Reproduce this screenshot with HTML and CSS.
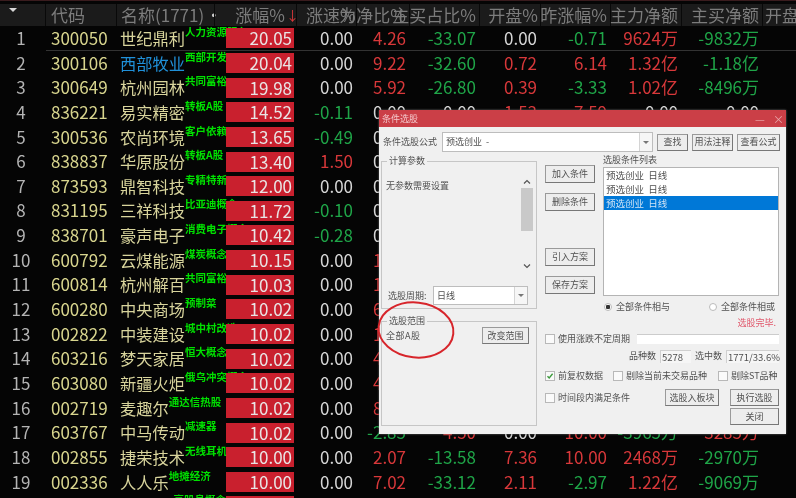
FILE: index.html
```html
<!DOCTYPE html>
<html lang="zh-CN">
<head>
    <meta charset="UTF-8">
    <title>条件选股</title>
    <link rel="stylesheet" href="styles.css">
</head>
<body>
<div class="page">
    <div class="head">
        <div class="hcell sort"><i class="sort-arrow"></i></div>
        <div class="hcell hleft">代码</div>
        <div class="hcell hname">名称(1771)<span class="hdot">·</span></div>
        <div class="hcell hrate">涨幅%<span class="down">↓</span></div>
        <div class="hcell hspeed">涨速%</div>
        <div class="hcell hnum">为净比%</div>
        <div class="hcell hnum">主买占比%</div>
        <div class="hcell hnum hopen">开盘%</div>
        <div class="hcell hnum">昨涨幅%</div>
        <div class="hcell hnum">主力净额</div>
        <div class="hcell hnum">主买净额</div>
        <div class="hcell hlast">开盘金额</div>
    </div>

    <div class="row first">
        <div class="no">1</div><div class="code">300050</div>
        <div class="name"><span>世纪鼎利</span><em>人力资源服务</em></div>
        <div class="rate"><b>20.05</b></div><div class="val">0.00</div><div class="val up">4.26</div><div class="val dn">-33.07</div><div class="val">0.00</div><div class="val dn">-0.71</div><div class="val up">9624万</div><div class="val dn">-9832万</div>
    </div>
    <div class="row">
        <div class="no">2</div><div class="code">300106</div>
        <div class="name"><span class="blue">西部牧业</span><em>西部开发</em></div>
        <div class="rate"><b>20.04</b></div><div class="val">0.00</div><div class="val up">9.22</div><div class="val dn">-32.60</div><div class="val up">0.72</div><div class="val up">6.14</div><div class="val up">1.32亿</div><div class="val dn">-1.18亿</div>
    </div>
    <div class="row">
        <div class="no">3</div><div class="code">300649</div>
        <div class="name"><span>杭州园林</span><em>共同富裕</em></div>
        <div class="rate"><b>19.98</b></div><div class="val">0.00</div><div class="val up">5.92</div><div class="val dn">-26.80</div><div class="val up">0.39</div><div class="val dn">-3.33</div><div class="val up">1.02亿</div><div class="val dn">-8496万</div>
    </div>
    <div class="row">
        <div class="no">4</div><div class="code">836221</div>
        <div class="name"><span>易实精密</span><em>转板A股</em></div>
        <div class="rate"><b>14.52</b></div><div class="val dn">-0.11</div><div class="val">0.00</div><div class="val">0.00</div><div class="val up">1.53</div><div class="val up">7.59</div><div class="val">0.00</div><div class="val">0.00</div>
    </div>
    <div class="row">
        <div class="no">5</div><div class="code">300536</div>
        <div class="name"><span>农尚环境</span><em>客户依赖</em></div>
        <div class="rate"><b>13.65</b></div><div class="val dn">-0.49</div><div class="val">0.00</div>
    </div>
    <div class="row">
        <div class="no">6</div><div class="code">838837</div>
        <div class="name"><span>华原股份</span><em>转板A股</em></div>
        <div class="rate"><b>13.40</b></div><div class="val up">1.50</div><div class="val">0.00</div>
    </div>
    <div class="row">
        <div class="no">7</div><div class="code">873593</div>
        <div class="name"><span>鼎智科技</span><em>专精特新</em></div>
        <div class="rate"><b>12.00</b></div><div class="val">0.00</div><div class="val">0.00</div>
    </div>
    <div class="row">
        <div class="no">8</div><div class="code">831195</div>
        <div class="name"><span>三祥科技</span><em>比亚迪概念</em></div>
        <div class="rate"><b>11.72</b></div><div class="val dn">-0.10</div><div class="val">0.00</div>
    </div>
    <div class="row">
        <div class="no">9</div><div class="code">838701</div>
        <div class="name"><span>豪声电子</span><em>消费电子概念</em></div>
        <div class="rate"><b>10.42</b></div><div class="val dn">-0.28</div><div class="val">0.00</div>
    </div>
    <div class="row">
        <div class="no">10</div><div class="code">600792</div>
        <div class="name"><span>云煤能源</span><em>煤炭概念</em></div>
        <div class="rate"><b>10.15</b></div><div class="val">0.00</div><div class="val up">1.15</div>
    </div>
    <div class="row">
        <div class="no">11</div><div class="code">600814</div>
        <div class="name"><span>杭州解百</span><em>共同富裕</em></div>
        <div class="rate"><b>10.03</b></div><div class="val">0.00</div><div class="val up">1.03</div>
    </div>
    <div class="row">
        <div class="no">12</div><div class="code">600280</div>
        <div class="name"><span>中央商场</span><em>预制菜</em></div>
        <div class="rate"><b>10.02</b></div><div class="val">0.00</div><div class="val up">6.02</div>
    </div>
    <div class="row">
        <div class="no">13</div><div class="code">002822</div>
        <div class="name"><span>中装建设</span><em>城中村改造</em></div>
        <div class="rate"><b>10.02</b></div><div class="val">0.00</div><div class="val up">1.02</div>
    </div>
    <div class="row">
        <div class="no">14</div><div class="code">603216</div>
        <div class="name"><span>梦天家居</span><em>恒大概念</em></div>
        <div class="rate"><b>10.02</b></div><div class="val">0.00</div><div class="val up">4.02</div>
    </div>
    <div class="row">
        <div class="no">15</div><div class="code">603080</div>
        <div class="name"><span>新疆火炬</span><em>俄乌冲突概念</em></div>
        <div class="rate"><b>10.02</b></div><div class="val">0.00</div><div class="val up">4.02</div>
    </div>
    <div class="row">
        <div class="no">16</div><div class="code">002719</div>
        <div class="name"><span>麦趣尔</span><em>通达信热股</em></div>
        <div class="rate"><b>10.02</b></div><div class="val">0.00</div><div class="val up">8.02</div>
    </div>
    <div class="row">
        <div class="no">17</div><div class="code">603767</div>
        <div class="name"><span>中马传动</span><em>减速器</em></div>
        <div class="rate"><b>10.02</b></div><div class="val">0.00</div><div class="val dn">-2.85</div><div class="val up">4.50</div><div class="val">0.00</div><div class="val up">10.00</div><div class="val dn">-3965万</div><div class="val up">3285万</div>
    </div>
    <div class="row">
        <div class="no">18</div><div class="code">002855</div>
        <div class="name"><span>捷荣技术</span><em>无线耳机</em></div>
        <div class="rate"><b>10.00</b></div><div class="val">0.00</div><div class="val up">2.07</div><div class="val dn">-13.58</div><div class="val up">7.36</div><div class="val up">10.00</div><div class="val up">2468万</div><div class="val dn">-2970万</div>
    </div>
    <div class="row">
        <div class="no">19</div><div class="code">002336</div>
        <div class="name"><span>人人乐</span><em>地摊经济</em></div>
        <div class="rate"><b>10.00</b></div><div class="val">0.00</div><div class="val up">7.02</div><div class="val dn">-33.12</div><div class="val up">2.11</div><div class="val dn">-2.97</div><div class="val up">1.22亿</div><div class="val dn">-9069万</div>
    </div>
    <div class="row">
        <div class="no"></div><div class="code"></div>
        <div class="name"><span class="blank"></span><em>高股息概念</em></div>
        <div class="rate"><b></b></div>
    </div>

    <!-- 条件选股 window -->
    <div class="dialog">
        <div class="dlg-title">
            <span>条件选股</span>
            <span class="win-btns"><i>—</i><i>×</i></span>
        </div>

        <div class="formula">
            <span class="formula-label">条件选股公式</span>
            <div class="combo combo-wide"><span>预选创业&nbsp;&nbsp;-</span><i class="caret"></i></div>
            <button class="btn btn-find">查找</button>
            <button class="btn btn-use">用法注释</button>
            <button class="btn btn-view">查看公式</button>
        </div>

        <div class="dlg-main">
            <div class="dlg-left">
                <fieldset class="group group-calc">
                    <legend>计算参数</legend>
                    <div class="calc-inner">
                        <div class="calc-text">无参数需要设置</div>
                        <div class="scrollbar">
                            <svg width="12" height="8" viewBox="0 0 12 8"><path d="M3 5.5 6 2.5 9 5.5" fill="none" stroke="#555" stroke-width="1.2"/></svg>
                            <div class="thumb"></div>
                            <svg class="scroll-down" width="12" height="8" viewBox="0 0 12 8"><path d="M3 2.5 6 5.5 9 2.5" fill="none" stroke="#555" stroke-width="1.2"/></svg>
                        </div>
                    </div>
                    <div class="period">
                        <span class="period-label">选股周期:</span>
                        <div class="combo combo-period"><span>日线</span><i class="caret"></i></div>
                    </div>
                </fieldset>
                <fieldset class="group group-range">
                    <legend>选股范围</legend>
                    <div class="range-row">
                        <span>全部A股</span>
                        <button class="btn btn-range">改变范围</button>
                    </div>
                </fieldset>
            </div>

            <div class="dlg-right">
                <div class="upper">
                    <div class="side-btns">
                        <button class="btn btn-side">加入条件</button>
                        <button class="btn btn-side">删除条件</button>
                        <button class="btn btn-side btn-gap">引入方案</button>
                        <button class="btn btn-side">保存方案</button>
                    </div>
                    <div class="list-col">
                        <div class="list-label">选股条件列表</div>
                        <div class="listbox">
                            <div class="item">预选创业&nbsp;&nbsp;日线</div>
                            <div class="item">预选创业&nbsp;&nbsp;日线</div>
                            <div class="item selected">预选创业&nbsp;&nbsp;日线</div>
                        </div>
                        <div class="radios">
                            <label class="radio-item"><i class="radio on"></i>全部条件相与</label>
                            <label class="radio-item"><i class="radio"></i>全部条件相或</label>
                        </div>
                        <div class="done">选股完毕.</div>
                    </div>
                </div>

                <div class="line line-period">
                    <i class="check"></i><span class="check-text">使用涨跌不定周期</span>
                    <div class="period-input"></div>
                </div>
                <div class="line line-count">
                    <span>品种数</span><span class="count-box count-a">5278</span>
                    <span>选中数</span><span class="count-box count-b">1771/33.6%</span>
                </div>
                <div class="line line-opts">
                    <i class="check"><svg width="8" height="8" viewBox="0 0 8 8"><path d="M1.5 4.2 3.2 6 6.6 1.8" fill="none" stroke="#3d9a3d" stroke-width="1.4"/></svg></i><span class="check-text opt-a">前复权数据</span>
                    <i class="check"></i><span class="check-text opt-b">剔除当前未交易品种</span>
                    <i class="check"></i><span class="check-text">剔除ST品种</span>
                </div>
                <div class="line line-run">
                    <i class="check"></i><span class="check-text run-text">时间段内满足条件</span>
                    <button class="btn btn-board">选股入板块</button>
                    <button class="btn btn-run">执行选股</button>
                </div>
                <div class="line line-close">
                    <button class="btn btn-run">关闭</button>
                </div>
            </div>
        </div>
    </div>

    <!-- hand-drawn ring over the window -->
    <svg class="ring" width="84" height="64" viewBox="0 0 84 64">
        <ellipse cx="42" cy="32" rx="37.5" ry="27.5" transform="rotate(6 42 32)" fill="none" stroke="#d7252b" stroke-width="2"/>
    </svg>
</div>
</body>
</html>
```

FILE: styles.css
```css
* {
    box-sizing: border-box;
}
html, body {
    margin: 0;
    height: 100%;
    background: #050505;
    overflow: hidden;
}
body {
    font-family: "Noto Sans CJK SC", "Liberation Sans", sans-serif;
}
.page {
    position: relative;
    width: 796px;
    height: 498px;
    overflow: hidden;
    border-top: 1px solid #3a1c1e;
    padding-top: 3px;
    filter: blur(0.35px);
}

/* table header */
.head {
    display: grid;
    grid-template-columns: 45px 71px 98px 82px 60px 53px 70px 61px 70px 71px 81px 34px;
    height: 22px;
    background: #1b1b1b;
    font-size: 17px;
    line-height: 22px;
    color: #7c7c7c;
    white-space: nowrap;
}
.hcell {
    border-left: 1px solid #090909;
    display: flex;
    justify-content: flex-end;
    padding-right: 3px;
}
.sort {
    border-left: 0;
    justify-content: flex-start;
    padding-left: 9px;
    align-items: center;
}
.sort-arrow {
    width: 0;
    height: 0;
    border-left: 4px solid transparent;
    border-right: 4px solid transparent;
    border-top: 4px solid #d8d8d8;
    margin-bottom: 10px;
}
.hleft {
    justify-content: flex-start;
    padding-left: 5px;
}
.hname {
    justify-content: flex-start;
    padding-left: 4px;
}
.hdot {
    color: #ccc;
    margin-left: 1px;
}
.hrate {
    padding-right: 1px;
}
.down {
    color: #d8383a;
    font-size: 13px;
    margin-left: 1px;
    width: 9px;
}
.hspeed {
    justify-content: flex-start;
    padding-left: 9px;
}
.hopen {
    padding-right: 2px;
}
.hlast {
    justify-content: flex-start;
    padding-left: 2px;
    overflow: hidden;
}

/* table rows */
.row {
    display: grid;
    grid-template-columns: 45px 71px 110px 70px 60px 53px 70px 61px 70px 71px 81px;
    height: 24.65px;
    font-size: 17px;
    line-height: 24.65px;
    color: #d6d6d6;
    white-space: nowrap;
}
.row.first {
    background: linear-gradient(#333, #333) left 46px bottom 0 / 100% 1px no-repeat;
}
.no {
    color: #b4b4b4;
    text-align: center;
    padding-right: 3px;
}
.code {
    color: #d8d58e;
    padding-left: 6px;
}
.name {
    display: flex;
    padding-left: 4px;
    color: #d8d49c;
    font-size: 16.25px;
}
.name .blue {
    color: #2090d8;
}
.name em {
    align-self: flex-start;
    font-style: normal;
    font-size: 10.5px;
    line-height: 11px;
    font-weight: 700;
    color: #00e000;
}
.blank {
    width: 65px;
}
.rate {
    padding: 2.3px 2px 2.3px 0;
}
.rate b {
    display: block;
    height: 20px;
    background: #c9202e;
    color: #e9e4e4;
    font-weight: 400;
    line-height: 20px;
    text-align: right;
    padding-right: 2px;
}
.val {
    text-align: right;
    padding-right: 3px;
}
.up {
    color: #d8383a;
}
.dn {
    color: #1fa548;
}

/* condition window */
.dialog {
    position: absolute;
    left: 379px;
    top: 109px;
    width: 407px;
    height: 324px;
    background: #f0f0f0;
    box-shadow: 0 0 2px #666;
    font-size: 9px;
    line-height: 12px;
    color: #505050;
    white-space: nowrap;
}
.dlg-title {
    display: flex;
    justify-content: space-between;
    height: 17px;
    background: #cb3f47;
    color: #f4c9cc;
    line-height: 18px;
    padding: 0 2px 0 3px;
}
.win-btns {
    display: flex;
    gap: 7px;
    font-size: 11px;
    color: #e8a5a9;
}
.win-btns i {
    font-style: normal;
    width: 11px;
}
.formula {
    display: flex;
    align-items: center;
    height: 20px;
    margin-top: 5px;
    padding-left: 4px;
}
.formula-label {
    width: 59px;
}
.combo {
    display: flex;
    justify-content: space-between;
    align-items: center;
    background: #fff;
    border: 1px solid #bdbdbd;
    padding-left: 3px;
    height: 20px;
}
.combo-wide {
    width: 211px;
    margin-right: 4px;
}
.combo-period {
    width: 95px;
    height: 19px;
}
.caret {
    display: flex;
    align-items: center;
    justify-content: center;
    width: 13px;
    height: 100%;
    border-left: 1px solid #d4d4d4;
    background: #f6f6f6;
}
.caret::after {
    content: "";
    border-left: 3px solid transparent;
    border-right: 3px solid transparent;
    border-top: 3px solid #777;
}
.btn {
    font: inherit;
    line-height: 12px;
    color: #505050;
    background: #ededed;
    border: 1px solid #9a9a9a;
    border-right-color: #777;
    border-bottom-color: #777;
    padding: 0;
    height: 17px;
    text-align: center;
}
.btn-find {
    width: 31px;
    margin-right: 4px;
}
.btn-use {
    width: 41px;
    margin-right: 4px;
}
.btn-view {
    width: 43px;
}
.dlg-main {
    display: flex;
    padding-left: 2px;
    margin-top: 3px;
}
.dlg-left {
    width: 156px;
    display: flex;
    flex-direction: column;
    gap: 6px;
}
.group {
    margin: 0;
    padding: 0;
    border: 1px solid #c6c6c6;
    min-width: 0;
}
.group legend {
    margin-left: 5px;
    padding: 0 2px;
}
.group-calc {
    height: 154px;
}
.group-range {
    height: 111px;
}
.calc-inner {
    display: flex;
    justify-content: space-between;
    height: 103px;
    padding: 11px 3px 0 4px;
}
.calc-text {
    padding-top: 2px;
}
.scrollbar {
    display: flex;
    flex-direction: column;
    width: 12px;
    height: 92px;
}
.thumb {
    height: 43px;
    margin-top: 2px;
    background: #c9c9c9;
}
.scroll-down {
    margin-top: auto;
}
.period {
    display: flex;
    align-items: center;
    padding-left: 6px;
    margin-top: 16px;
}
.period-label {
    width: 45px;
}
.range-row {
    display: flex;
    justify-content: space-between;
    padding: 0 7px 0 4px;
}
.range-row span {
    padding-top: 3px;
    letter-spacing: 0.5px;
}
.btn-range {
    width: 47px;
}
.dlg-right {
    width: 234px;
    margin-left: 8px;
}
.upper {
    display: flex;
    height: 178px;
}
.side-btns {
    display: flex;
    flex-direction: column;
    gap: 10px;
    width: 50px;
    padding-top: 10px;
}
.btn-side {
    width: 50px;
    height: 18px;
    flex: none;
}
.btn-gap {
    margin-top: 27px;
}
.list-col {
    margin-left: 8px;
    width: 176px;
}
.list-label {
    height: 12px;
    line-height: 10px;
}
.listbox {
    height: 129px;
    background: #fff;
    border: 1px solid #b4b4b4;
}
.item {
    height: 14px;
    line-height: 14px;
    padding-left: 2px;
    font-size: 9.5px;
}
.selected {
    background: #0078d7;
    color: #cfe3f5;
}
.radios {
    display: flex;
    justify-content: space-between;
    margin-top: 5px;
    padding: 0 4px 0 1px;
}
.radio-item {
    display: flex;
    align-items: center;
    gap: 4px;
}
.radio {
    width: 8px;
    height: 8px;
    border-radius: 50%;
    background: #fff;
    border: 1px solid #bbb;
}
.radio.on {
    background: radial-gradient(circle, #333 0 2px, #fff 2.5px);
}
.done {
    text-align: right;
    color: #e0566a;
    padding-right: 3px;
    margin-top: 4px;
}
.line {
    display: flex;
    align-items: center;
}
.check {
    display: flex;
    flex: none;
    width: 10px;
    height: 10px;
    background: #fafafa;
    border: 1px solid #b8b8b8;
}
.check-text {
    margin-left: 3px;
}
.line-period {
    height: 12px;
}
.line-period .check-text {
    width: 79px;
}
.period-input {
    width: 142px;
    height: 10px;
    background: #fff;
    border-top: 1px solid #ccc;
}
.line-count {
    justify-content: flex-end;
    height: 14px;
    margin-top: 4px;
}
.count-box {
    background: #f6f6f6;
    border-top: 1px solid #d0d0d0;
    border-left: 1px solid #d0d0d0;
    height: 13px;
    line-height: 12px;
    padding-left: 1px;
    font-size: 9.5px;
}
.count-a {
    width: 31px;
    margin: 0 4px;
}
.count-b {
    width: 53px;
    margin-left: 4px;
}
.line-opts {
    height: 12px;
    margin-top: 7px;
}
.opt-a {
    width: 55px;
}
.opt-b {
    width: 92px;
}
.line-run {
    height: 17px;
    margin-top: 7px;
}
.run-text {
    width: 107px;
}
.btn-board {
    width: 54px;
    margin-right: 11px;
}
.btn-run {
    width: 49px;
}
.line-close {
    justify-content: flex-end;
    margin-top: 2px;
}
.ring {
    position: absolute;
    left: 374px;
    top: 297px;
}
```
